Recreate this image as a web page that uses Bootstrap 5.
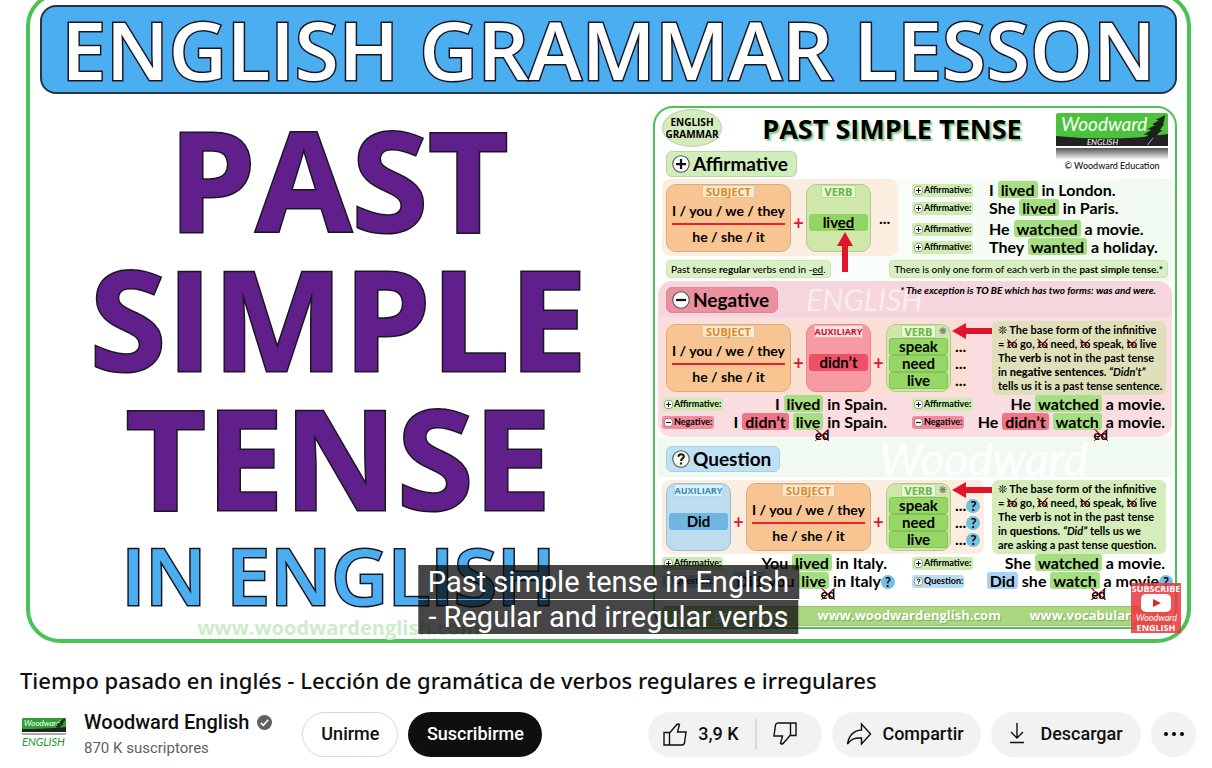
<!DOCTYPE html>
<html lang="es">
<head>
<meta charset="utf-8">
<meta name="viewport" content="width=device-width, initial-scale=1">
<title>Tiempo pasado en inglés - Woodward English</title>
<link href="https://cdn.jsdelivr.net/npm/bootstrap@5.3.0/dist/css/bootstrap.min.css" rel="stylesheet">
<style>
  body { font-family: Roboto, "Liberation Sans", sans-serif; color: #0f0f0f; background: #fff; overflow-x: hidden; }

  /* video still */
  .slide { margin: -8px 21px 0 26px; padding: 9px 10px 0; border: 4px solid #4bc254; border-radius: 34px; color: #000; font-family: "Open Sans", "Noto Sans", sans-serif; }
  .banner { height: 89px; border: 2px solid #263645; border-radius: 16px; background: #4aaef0; color: #fff; font-size: 80px; font-weight: 600; line-height: 83px; white-space: nowrap; }
  .outlined { -webkit-text-stroke: 3px #1b1722; paint-order: stroke fill; }
  .headline { color: #601f8a; font-size: 139px; font-weight: 700; line-height: 139px; }
  .subline { color: #4aaef0; font-size: 78px; font-weight: 600; line-height: 90px; white-space: nowrap; }
  .slide-url { color: #cdecc8; font-size: 20px; font-weight: 700; line-height: 16px; }
  .words { padding-top: 15px; }
  .caption { left: 50%; bottom: 4px; transform: translateX(-50%); color: #fff; font: 400 29px/35px Roboto, sans-serif; white-space: nowrap; z-index: 4; }
  .caption span { background: rgba(8,8,8,.75); padding: 0 10px; }

  /* grammar poster inside the still */
  .poster { width: 524px; margin: 12px 0 10px; padding: 0 3px; border: 2px solid #4bc254; border-radius: 20px; font-family: Lato, "Open Sans", sans-serif; font-weight: 700; overflow: hidden; }
  .poster-head { height: 71px; padding: 1px 4px 0; }
  .head-left { width: 66px; }
  .oval { width: 60px; height: 38px; border: 1px solid #b9cfa8; border-radius: 50%; background: #d5ecbf; font: 700 10px/12px "Open Sans", sans-serif; }
  .poster-title { font: 700 27px/40px "Open Sans", sans-serif; text-shadow: 2px 2px 2px #7fc98a; white-space: nowrap; }
  .copy { font-size: 9px; line-height: 12px; font-weight: 400; }
  .section-pill { height: 26px; width: max-content; padding: 0 8px 0 5px; gap: 3px; border: 1px solid #b7d8a2; border-radius: 6px; background: #cfeebb; font-size: 19px; line-height: 24px; }
  .pill-red { background: #eb909f; border-color: #dd8795; margin-top: 3px; }
  .pill-blue { background: #bfe1f4; border-color: #a9cfe6; }
  .affirm, .question { padding: 0 4px; }
  .affirm { height: 102px; background: linear-gradient(90deg, #fff, #f1faf0); }
  .negative { height: 156px; padding: 3px 4px 0; border-radius: 14px; background: linear-gradient(#f5d6dc 0 36px, #f9dde1 36px); }
  .question { height: 169px; padding-top: 9px; background: linear-gradient(#f1faf1 0 40px, #fff 40px); }
  .formula { padding: 2px 4px; border-radius: 8px; background: #fbdfd2; }
  .affirm .formula, .question .formula { background: #fbeee0; }
  .tile { height: 68px; width: 65px; border: 1px solid #d3ad86; border-radius: 10px; text-align: center; white-space: nowrap; }
  .tile-subject { width: 125px; background: #f8c592; font-size: 14px; }
  .tile-verb { background: #cfe7a9; border-color: #b2cb8e; }
  .tile-red { background: #f89aa2; border-color: #dd8990; }
  .tile-blue { background: #bddcee; border-color: #9dbfd2; }
  .tile-name { width: max-content; height: 13px; margin: 0 auto; padding: 0 3px; border: 1px solid #dcc9a3; background: #fbe9cf; color: #d98927; font: 700 11px/11px "Open Sans", sans-serif; }
  .tile-verb .tile-name { color: #64b73f; background: #ebf5d8; border-color: #c2dba0; }
  .tile-red .tile-name { color: #c8102e; background: #fce0df; border-color: #ecb0b3; font-size: 9px; padding: 0; }
  .tile-blue .tile-name { color: #2f8fc0; background: #def0f8; border-color: #b4d7e8; font-size: 9px; padding: 0; }
  .over-line { border-bottom: 2px solid #e8232f; margin: 0 5px; line-height: 25px; }
  .under-line { line-height: 24px; }
  .answer { margin: 16px 2px 0; border-radius: 3px; background: #93d564; font-size: 15px; line-height: 17px; }
  .tile-red .answer { background: #ee5068; }
  .tile-blue .answer { background: #6fb6e2; }
  .verbs .verb-form { display: block; margin: 0 2px; border: 1px solid #86c258; border-radius: 3px; background: #97d765; font-size: 15px; line-height: 15px; }
  .star { right: 3px; top: 0; font-size: 9px; line-height: 11px; color: #777; }
  .plus { width: 15px; padding-top: 10px; color: #d9182b; font-size: 18px; line-height: 20px; text-align: center; }
  .dots { font-size: 16px; line-height: 17px; padding-left: 4px; white-space: nowrap; }
  .note { border: 1px solid #cfe3b4; border-radius: 4px; background: #d9efc4; font-size: 10px; line-height: 16px; padding: 0 4px; white-space: nowrap; font-weight: 500; }
  .explain { position: relative; width: 174px; height: 74px; margin-right: 2px; padding: 2px 0 0 6px; border-radius: 6px; background: #dfe0b9; font-size: 11px; line-height: 14px; white-space: nowrap; }
  .question .explain { background: #d5edbb; }
  .side-arrow { position: absolute; left: -40px; top: 2px; }
  .exception { font-size: 10px; line-height: 12px; font-style: italic; padding-right: 12px; }
  .label-chip { display: inline-flex; align-items: center; gap: 1px; height: 13px; width: 61px; padding-left: 2px; border-radius: 3px; background: #cdebb3; font-size: 9px; line-height: 12px; white-space: nowrap; }
  .chip-red { background: #f08c9b; width: 52px; }
  .chip-blue { background: #badcf3; width: 52px; }
  .facts { width: 256px; padding-top: 2px; }
  .fact-gap { margin-top: 3px; }
  .example { height: 18px; font-size: 16px; line-height: 18px; white-space: nowrap; }
  .hl { background: #a5de83; border-radius: 3px; padding: 0 3px; display: inline-block; line-height: 17px; }
  .hl-red { background: #ee7486; }
  .hl-blue { background: #a9d3f2; }
  .half-left { width: 225px; }
  .half-right { width: 256px; padding-right: 3px; }
  .crossed { background: linear-gradient(40deg, transparent 46%, #d3202e 47% 53%, transparent 54%), linear-gradient(-40deg, transparent 46%, #d3202e 47% 53%, transparent 54%); }
  .dropped { position: absolute; right: -6px; top: 16px; font-size: 13px; line-height: 12px; z-index: 1; }
  .up-arrow { position: absolute; left: 30px; top: 47px; z-index: 1; }
  .qmark { display: inline-block; width: 14px; height: 14px; border-radius: 50%; background: #76bfdf; font-size: 13px; line-height: 14px; text-align: center; }
  .hang { margin-right: -8px; }
  .ghost { color: rgba(255,255,255,.55); font-style: italic; font-weight: 400; }
  .ghost-small { left: 148px; top: 5px; font-size: 30px; line-height: 26px; }
  .ghost-large { font-size: 46px; line-height: 26px; padding-right: 80px; color: #fff; }
  .poster-foot { height: 20px; border: 1px solid #96bd72; border-radius: 4px; background: #a9d880; color: #fff; font: 700 13px/17px "Open Sans", sans-serif; margin: 0 4px 1px; white-space: nowrap; text-shadow: 1px 1px 1px #7ba85a; }
  .subscribe-mark { right: 6px; bottom: 6px; width: 50px; height: 50px; background: rgba(237,52,60,.85); color: #fff; font: 700 9px/11px "Open Sans", sans-serif; text-align: center; z-index: 3; border: 0; }

  /* below the player */
  .video-title { font: 500 22px/28px "Noto Sans", sans-serif; margin: 23px 0 0; }
  .channel { font-size: 20px; line-height: 28px; font-weight: 500; color: #0f0f0f; }
  .subs { font-size: 15px; line-height: 24px; color: #606060; }
  .pill-btn { height: 45px; margin-left: 10px; border: 0; border-radius: 23px; background: #f2f2f2; color: #0f0f0f; font-size: 18px; line-height: 24px; font-weight: 500; padding: 0 19px; gap: 10px; white-space: nowrap; display: inline-flex; align-items: center; justify-content: center; }
  .pill-join { margin-left: 30px; background: #fff; border: 1px solid #d9d9d9; width: 96px; padding: 0; }
  .pill-dark { background: #0f0f0f; color: #fff; width: 134px; }
  .like { width: 108px; padding: 0 17px 0 14px; }
  .dislike { width: 66px; padding: 0 24px 0 16px; margin: 0; position: relative; }
  .dislike::before { content: ""; position: absolute; left: -1px; top: 7px; width: 2px; height: 30px; background: #d9d9d9; }
  .share { width: 149px; padding: 0 17px 0 14px; }
  .down { width: 150px; padding: 0 18px 0 13px; }
  .more { width: 45px; padding: 0; }
  .action-row { padding: 14px 16px 8px 20px; }
  .line-icon { fill: none; stroke: #0f0f0f; stroke-width: 1.4; flex: none; }
</style>
</head>
<body>
<svg class="d-none" aria-hidden="true">
  <symbol id="i-plus" viewBox="0 0 16 16"><circle cx="8" cy="8" r="7.3" fill="#fff" stroke="#555"/><path d="M8 3.5v9M3.5 8h9" stroke="#111" stroke-width="2"/></symbol>
  <symbol id="i-minus" viewBox="0 0 16 16"><circle cx="8" cy="8" r="7.3" fill="#fff" stroke="#555"/><path d="M3.5 8h9" stroke="#111" stroke-width="2"/></symbol>
  <symbol id="i-ask" viewBox="0 0 16 16"><circle cx="8" cy="8" r="7.3" fill="#f6fff0" stroke="#555"/><path d="M5.8 6c0-3 4.7-3 4.7-.3C10.500 7.600 8 7.600 8 9.800M8 11v1.800" fill="none" stroke="#111" stroke-width="1.8"/></symbol>
  <symbol id="i-arrow" viewBox="0 0 40 16"><path d="M0 8 14 0v5h26v6H14v5z" fill="#e2142d"/></symbol>
  <symbol id="i-fern" viewBox="0 0 26 34"><path d="M24 1Q18 18 5 33" fill="none" stroke="#bbb"/><path d="M24 1 14 6l3 1-7 4 3 1-8 4 4 1-8 5 5 0-5 4 9-1Q22 16 24 1z" fill="#182418"/><path d="m24 2-4 9 3-1-5 7 3 0-6 5 2 1-7 3z" fill="#182418"/></symbol>
</svg>

<main>
  <section class="slide position-relative" aria-label="Video">
    <div class="banner outlined text-center">ENGLISH GRAMMAR LESSON</div>
    <div class="d-flex justify-content-between">
      <div class="words flex-grow-1 text-center">
        <div class="headline outlined">PAST</div>
        <div class="headline outlined">SIMPLE</div>
        <div class="headline outlined">TENSE</div>
        <div class="subline outlined mt-1">IN ENGLISH</div>
        <div class="slide-url">www.woodwardenglish.com</div>
      </div>

      <div class="poster flex-shrink-0 ms-3">
        <div class="poster-head d-flex justify-content-between">
          <div class="head-left">
            <div class="oval d-flex align-items-center text-center justify-content-center">ENGLISH<br>GRAMMAR</div>
            <div class="section-pill d-flex align-items-center mt-1 ms-1"><svg width="18" height="18"><use href="#i-plus"/></svg>Affirmative</div>
          </div>
          <div class="poster-title">PAST SIMPLE TENSE</div>
          <div class="text-center pt-1">
            <svg class="d-block" width="112" height="47" viewBox="0 0 112 47">
              <defs><linearGradient id="mirror" x2="0" y2="1"><stop stop-color="#555"/><stop offset="1" stop-color="#fff"/></linearGradient></defs>
              <rect width="112" height="33" rx="2" fill="#4cc23c"/><path d="M0 23Q60 29 112 21V33H0z" fill="#222"/>
              <rect y="35" width="112" height="12" fill="url(#mirror)"/>
              <text x="5" y="18" fill="#fff" font-family="Lato" font-style="italic" font-weight="400" font-size="19">Woodward</text>
              <text x="31" y="32" fill="#fff" font-family="Lato" font-style="italic" font-weight="400" font-size="8">ENGLISH</text>
              <use href="#i-fern" x="86" y="1" width="26" height="32"/>
            </svg>
            <div class="copy">© Woodward Education</div>
          </div>
        </div>

        <div class="affirm">
          <div class="d-flex justify-content-between">
            <div class="formula d-flex align-items-center">
              <div class="tile tile-subject"><div class="tile-name">SUBJECT</div><div class="over-line">I / you / we / they</div><div class="under-line">he / she / it</div></div>
              <div class="plus">+</div>
              <div class="tile tile-verb position-relative"><div class="tile-name">VERB</div><div class="answer">liv<u>ed</u></div>
                <svg class="up-arrow" width="16" height="40" viewBox="0 0 16 40"><path d="M8 0 16 14h-5v26H5V14H0z" fill="#e2142d"/></svg></div>
              <div class="dots ps-2 pe-1">...</div>
            </div>
            <div class="facts">
              <div class="example d-flex align-items-center"><span class="label-chip me-3"><svg width="9" height="9"><use href="#i-plus"/></svg>Affirmative:</span><span>I <span class="hl">lived</span> in London.</span></div>
              <div class="example d-flex align-items-center"><span class="label-chip me-3"><svg width="9" height="9"><use href="#i-plus"/></svg>Affirmative:</span><span>She <span class="hl">lived</span> in Paris.</span></div>
              <div class="example fact-gap d-flex align-items-center"><span class="label-chip me-3"><svg width="9" height="9"><use href="#i-plus"/></svg>Affirmative:</span><span>He <span class="hl">watched</span> a movie.</span></div>
              <div class="example d-flex align-items-center"><span class="label-chip me-3"><svg width="9" height="9"><use href="#i-plus"/></svg>Affirmative:</span><span>They <span class="hl">wanted</span> a holiday.</span></div>
            </div>
          </div>
          <div class="d-flex justify-content-between pt-1 ps-1">
            <div class="note">Past tense <b>regular</b> verbs end in -<u>ed</u>.</div>
            <div class="note">There is only one form of each verb in the <b>past simple tense.*</b></div>
          </div>
        </div>

        <div class="negative position-relative">
          <div class="ghost ghost-small position-absolute" aria-hidden="true">ENGLISH</div>
          <div class="d-flex justify-content-between position-relative">
            <div class="section-pill pill-red d-flex align-items-center ms-1"><svg width="18" height="18"><use href="#i-minus"/></svg>Negative</div>
            <div class="exception">* The exception is <b>TO BE</b> which has two forms: <b>was</b> and <b>were.</b></div>
          </div>
          <div class="d-flex pt-2">
            <div class="formula d-flex align-items-center">
              <div class="tile tile-subject"><div class="tile-name">SUBJECT</div><div class="over-line">I / you / we / they</div><div class="under-line">he / she / it</div></div>
              <div class="plus">+</div>
              <div class="tile tile-red"><div class="tile-name">AUXILIARY</div><div class="answer">didn’t</div></div>
              <div class="plus">+</div>
              <div class="tile tile-verb verbs position-relative"><div class="tile-name">VERB</div><span class="star position-absolute">❊</span><span class="verb-form">speak</span><span class="verb-form">need</span><span class="verb-form">live</span></div>
              <div class="dots pt-2">...<br>...<br>...</div>
            </div>
            <div class="explain flex-shrink-0 ms-auto"><svg class="side-arrow" width="40" height="16"><use href="#i-arrow"/></svg><span class="fw-normal">❊</span> The base form of the infinitive<br>= <span class="crossed">to</span> go, <span class="crossed">to</span> need, <span class="crossed">to</span> speak, <span class="crossed">to</span> live<br>The <b>verb</b> is not in the past tense<br>in <b>negative sentences</b>. <i>“Didn’t”</i><br>tells us it is a past tense sentence.</div>
          </div>
          <div class="d-flex justify-content-between">
            <div class="half-left">
              <div class="example d-flex align-items-center justify-content-between"><span class="label-chip"><svg width="9" height="9"><use href="#i-plus"/></svg>Affirmative:</span><span>I <span class="hl">lived</span> in Spain.</span></div>
              <div class="example d-flex align-items-center justify-content-between"><span class="label-chip chip-red"><svg width="9" height="9"><use href="#i-minus"/></svg>Negative:</span><span>I <span class="hl hl-red">didn’t</span> <span class="hl position-relative">live<span class="dropped crossed">ed</span></span> in Spain.</span></div>
            </div>
            <div class="half-right">
              <div class="example d-flex align-items-center justify-content-between"><span class="label-chip"><svg width="9" height="9"><use href="#i-plus"/></svg>Affirmative:</span><span>He <span class="hl">watched</span> a movie.</span></div>
              <div class="example d-flex align-items-center justify-content-between"><span class="label-chip chip-red"><svg width="9" height="9"><use href="#i-minus"/></svg>Negative:</span><span>He <span class="hl hl-red">didn’t</span> <span class="hl position-relative">watch<span class="dropped crossed">ed</span></span> a movie.</span></div>
            </div>
          </div>
        </div>

        <div class="question">
          <div class="d-flex justify-content-between">
            <div class="section-pill pill-blue d-flex align-items-center ms-1"><svg width="18" height="18"><use href="#i-ask"/></svg>Question</div>
            <div class="ghost ghost-large" aria-hidden="true">Woodward</div>
          </div>
          <div class="d-flex pt-2">
            <div class="formula d-flex align-items-center">
              <div class="tile tile-blue"><div class="tile-name">AUXILIARY</div><div class="answer">Did</div></div>
              <div class="plus">+</div>
              <div class="tile tile-subject"><div class="tile-name">SUBJECT</div><div class="over-line">I / you / we / they</div><div class="under-line">he / she / it</div></div>
              <div class="plus">+</div>
              <div class="tile tile-verb verbs position-relative"><div class="tile-name">VERB</div><span class="star position-absolute">❊</span><span class="verb-form">speak</span><span class="verb-form">need</span><span class="verb-form">live</span></div>
              <div class="dots pt-2">...<span class="qmark">?</span><br>...<span class="qmark">?</span><br>...<span class="qmark">?</span></div>
            </div>
            <div class="explain flex-shrink-0 ms-auto"><svg class="side-arrow" width="40" height="16"><use href="#i-arrow"/></svg><span class="fw-normal">❊</span> The base form of the infinitive<br>= <span class="crossed">to</span> go, <span class="crossed">to</span> need, <span class="crossed">to</span> speak, <span class="crossed">to</span> live<br>The <b>verb</b> is not in the past tense<br>in <b>questions</b>. <i>“Did”</i> tells us we<br>are asking a past tense question.</div>
          </div>
          <div class="d-flex justify-content-between">
            <div class="half-left">
              <div class="example d-flex align-items-center justify-content-between"><span class="label-chip"><svg width="9" height="9"><use href="#i-plus"/></svg>Affirmative:</span><span>You <span class="hl">lived</span> in Italy.</span></div>
              <div class="example d-flex align-items-center justify-content-between"><span class="label-chip chip-blue"><svg width="9" height="9"><use href="#i-ask"/></svg>Question:</span><span class="hang"><span class="hl hl-blue">Did</span> you <span class="hl position-relative">live<span class="dropped crossed">ed</span></span> in Italy<span class="qmark">?</span></span></div>
            </div>
            <div class="half-right">
              <div class="example d-flex align-items-center justify-content-between"><span class="label-chip"><svg width="9" height="9"><use href="#i-plus"/></svg>Affirmative:</span><span>She <span class="hl">watched</span> a movie.</span></div>
              <div class="example d-flex align-items-center justify-content-between"><span class="label-chip chip-blue"><svg width="9" height="9"><use href="#i-ask"/></svg>Question:</span><span class="hang"><span class="hl hl-blue">Did</span> she <span class="hl position-relative">watch<span class="dropped crossed">ed</span></span> a movie<span class="qmark">?</span></span></div>
            </div>
          </div>
        </div>
        <div class="poster-foot d-flex justify-content-around"><span>www.grammar.cl</span><span>www.woodwardenglish.com</span><span>www.vocabulary.cl</span></div>
      </div>
    </div>

    <div class="caption position-absolute text-center"><span>Past simple tense in English</span><br><span>- Regular and irregular verbs</span></div>
    <button type="button" class="subscribe-mark position-absolute p-0">SUBSCRIBE
      <svg class="d-block mx-auto" width="50" height="28" viewBox="0 0 50 28"><rect x="10" width="30" height="18" rx="5" fill="#fff"/><path d="m22 5 8 4-8 4z" fill="#e5252f"/><text x="5" y="27" fill="#fff" font-family="Lato" font-style="italic" font-weight="400" font-size="9">Woodward</text></svg>
      <span class="d-block">ENGLISH</span></button>
  </section>

  <h1 class="video-title px-3 ms-1">Tiempo pasado en inglés - Lección de gramática de verbos regulares e irregulares</h1>

  <div class="action-row d-flex align-items-center">
    <svg width="48" height="45" viewBox="0 0 48 45" role="img" aria-label="Woodward English">
      <rect x="2" y="6" width="44" height="14" rx="1" fill="#2f9e35"/><path d="M2 17q24 0 44-2v5H2z" fill="#222"/><path d="M2 21h44v2H2z" fill="#aaa"/>
      <text x="4" y="14" font-family="Lato" font-style="italic" font-size="8" fill="#fff">Woodward</text>
      <path d="m45 7-8 11M45 7l-5 3M44 9l-7 4M43 12l-7 3" stroke="#163816" stroke-width="1.5"/>
      <text x="2" y="34" font-family="Lato" font-style="italic" font-size="11" fill="#1f9a30">ENGLISH</text>
    </svg>
    <div class="ms-3">
      <div class="d-flex align-items-center"><a href="#" class="channel text-decoration-none">Woodward English</a>
        <svg class="ms-2" width="15" height="15" viewBox="0 0 16 16"><circle cx="8" cy="8" r="8" fill="#606060"/><path d="m4 8.300 2.700 2.700 5.300-6" fill="none" stroke="#fff" stroke-width="1.800"/></svg></div>
      <div class="subs">870 K suscriptores</div>
    </div>
    <button type="button" class="pill-btn pill-join">Unirme</button>
    <button type="button" class="pill-btn pill-dark">Suscribirme</button>
    <div class="d-flex ms-auto">
      <button type="button" class="pill-btn like rounded-end-0"><svg class="line-icon" width="26" height="26" viewBox="0 0 26 26"><path d="M2 11.500h5.500V24H2zM7.500 12 14 4.500Q16 2 17.500 3.500L15.500 11H24l-1.500 11q-.5 2-2.500 2H7.500"/></svg>3,9 K</button>
      <button type="button" class="pill-btn dislike rounded-start-0" aria-label="No me gusta"><svg class="line-icon" width="26" height="26" viewBox="0 0 26 26"><path d="M24 14.500h-5.500V2H24zM18.500 14 12 21.500Q10 24 8.500 22.500L10.500 15H2L3.500 4Q4 2 6 2h12.500"/></svg></button>
      <button type="button" class="pill-btn share"><svg class="line-icon" width="26" height="26" viewBox="0 0 26 26"><path d="M15.500 3l9 10-9 10v-6C8 16.500 5 18.500 1.500 23 3 14 8 9.500 15.500 9z"/></svg>Compartir</button>
      <button type="button" class="pill-btn down"><svg class="line-icon" width="26" height="26" viewBox="0 0 26 26"><path d="M13 2v15M7 11l6 6 6-6M6 21.500h14"/></svg>Descargar</button>
      <button type="button" class="pill-btn more" aria-label="Más acciones"><svg width="20" height="6" viewBox="0 0 20 6"><circle cx="2" cy="3" r="2"/><circle cx="10" cy="3" r="2"/><circle cx="18" cy="3" r="2"/></svg></button>
    </div>
  </div>
</main>
<script src="https://cdn.jsdelivr.net/npm/bootstrap@5.3.0/dist/js/bootstrap.bundle.min.js"></script>
</body>
</html>
